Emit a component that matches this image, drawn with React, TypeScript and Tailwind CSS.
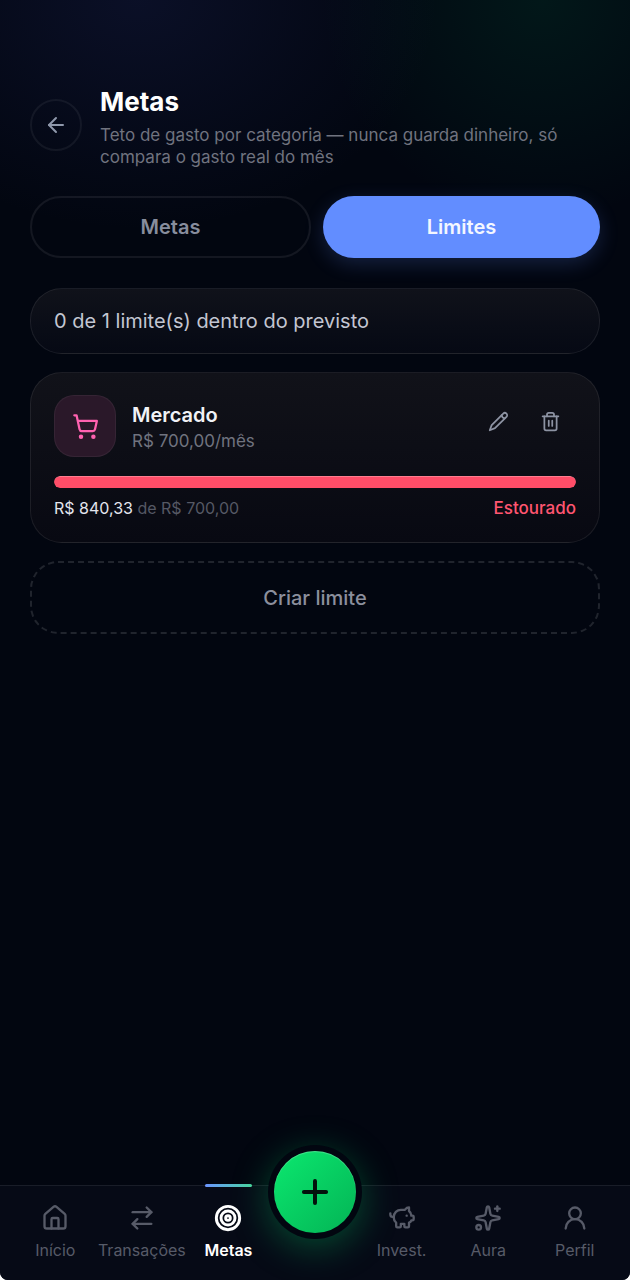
import { useState } from 'react'
import {
  ArrowLeft,
  ArrowRightLeft,
  House,
  PiggyBank,
  Plus,
  ShoppingCart,
  Sparkles,
  Target,
  Trash2,
  UserRound,
  type LucideIcon,
} from 'lucide-react'

interface Limit {
  id: string
  name: string
  limitCents: number
  spentCents: number
}

interface NavEntry {
  label: string
  icon: LucideIcon
}

const limits: Limit[] = [{ id: 'mercado', name: 'Mercado', limitCents: 70000, spentCents: 84033 }]

const leftNav: NavEntry[] = [
  { label: 'Início', icon: House },
  { label: 'Transações', icon: ArrowRightLeft },
  { label: 'Metas', icon: Target },
]

const rightNav: NavEntry[] = [
  { label: 'Invest.', icon: PiggyBank },
  { label: 'Aura', icon: Sparkles },
  { label: 'Perfil', icon: UserRound },
]

const tabs = ['Metas', 'Limites']

function brl(cents: number) {
  return `R$ ${(cents / 100).toFixed(2).replace('.', ',')}`
}

// Narrower than the lucide pencil
function PencilIcon() {
  return (
    <svg
      width={21}
      height={21}
      viewBox="0 0 24 24"
      fill="none"
      stroke="currentColor"
      strokeWidth={2}
      strokeLinecap="round"
      strokeLinejoin="round"
      aria-hidden="true"
    >
      <path d="M17.4 2.9a2.6 2.6 0 0 1 3.7 3.7L8 19.6 2 22l2.2-5.9Z" />
      <path d="M15.6 4.8c.2 2 1.500 3.400 3.600 3.600" />
    </svg>
  )
}

function LimitCard({ limit }: { limit: Limit }) {
  const pct = Math.min(100, (limit.spentCents / limit.limitCents) * 100)
  const over = limit.spentCents > limit.limitCents

  return (
    <article className="rounded-[32px] border border-white/8 bg-linear-to-b from-[#111219] to-[#080912] px-[23px] py-[22px]">
      <div className="flex items-start">
        <div className="flex size-[62px] shrink-0 items-center justify-center rounded-[20px] border border-white/5 bg-[#2a1829] text-[#ff62b0]">
          <ShoppingCart size={27} strokeWidth={2} />
        </div>
        <div className="ml-4 min-w-0 flex-1 pt-1.5">
          <h2 className="text-xl leading-7 font-semibold text-[#f1f2f6]">{limit.name}</h2>
          <p className="text-[17px] leading-6 text-[#70737f]">{brl(limit.limitCents)}/mês</p>
        </div>
        <div className="flex text-[#8d93a3]">
          <button type="button" aria-label="Editar limite" className="flex size-[52px] items-center justify-center">
            <PencilIcon />
          </button>
          <button type="button" aria-label="Excluir limite" className="flex size-[52px] items-center justify-center">
            <Trash2 size={21} strokeWidth={2} />
          </button>
        </div>
      </div>

      <div className="mt-[19px] h-3 overflow-hidden rounded-full bg-white/8">
        <div
          className="h-full rounded-full border-t border-[#ff7d8f] bg-[#ff4d68]"
          style={{ width: `${pct}%` }}
        />
      </div>

      <div className="mt-2 flex items-center justify-between leading-6">
        <p className="text-base text-[#555864]">
          <span className="text-[#e3e5ee]">{brl(limit.spentCents)}</span> de {brl(limit.limitCents)}
        </p>
        {over && <span className="text-[17px] leading-6 font-medium text-[#ff5570]">Estourado</span>}
      </div>
    </article>
  )
}

function NavLink({ entry, active }: { entry: NavEntry; active?: boolean }) {
  const Icon = entry.icon
  return (
    <a
      href="#"
      aria-current={active ? 'page' : undefined}
      className={`relative flex flex-col items-center gap-1.5 pt-[18px] ${active ? 'text-white' : 'text-[#575b68]'}`}
    >
      {active && (
        <span className="absolute -top-0.5 h-[3px] w-[47px] rounded-full bg-linear-to-r from-[#6b93ff] to-[#46d39a]" />
      )}
      <Icon size={28} strokeWidth={active ? 2.5 : 2} />
      <span className={`text-base leading-6 ${active ? 'font-semibold' : 'font-normal'}`}>{entry.label}</span>
    </a>
  )
}

export default function App() {
  const [tab, setTab] = useState('Limites')
  const within = limits.filter((l) => l.spentCents <= l.limitCents).length

  return (
    <div className="bg-white font-['Inter',sans-serif]">
      <div className="flex min-h-screen flex-col overflow-hidden rounded-b-lg bg-[#020610] bg-[radial-gradient(300px_230px_at_22%_0%,rgba(60,70,170,0.15),transparent),radial-gradient(220px_220px_at_86%_0%,rgba(0,150,90,0.12),transparent)]">
        <main className="flex-1 px-[30px] pt-[82px] pb-10">
          <header className="flex items-center gap-[18px]">
            <button
              type="button"
              aria-label="Voltar"
              className="flex size-[52px] shrink-0 items-center justify-center rounded-full border-2 border-white/6 text-[#8f98ab]"
            >
              <ArrowLeft size={24} strokeWidth={2} />
            </button>
            <div className="min-w-0 pt-0.5">
              <h1 className="text-[26px] leading-9 font-bold text-white">Metas</h1>
              <p className="mt-1 text-[17px] leading-[22px] text-[#70737f]">
                Teto de gasto por categoria — nunca guarda dinheiro, só compara o gasto real do mês
              </p>
            </div>
          </header>

          <div role="tablist" className="mt-7 flex gap-3">
            {tabs.map((t) => (
              <button
                key={t}
                type="button"
                role="tab"
                aria-selected={tab === t}
                onClick={() => setTab(t)}
                className={`h-[62px] flex-1 rounded-full text-xl font-semibold ${
                  tab === t
                    ? 'bg-[#628dff] text-[#f4f7ff] shadow-[0_6px_20px_rgba(98,141,255,0.2)]'
                    : 'border-2 border-white/7 text-[#878d9d]'
                }`}
              >
                {t}
              </button>
            ))}
          </div>

          <p className="mt-[30px] rounded-[32px] border border-white/8 bg-linear-to-b from-[#10121a] to-[#060914] px-[23px] py-[17px] text-xl leading-[30px] text-[#c3c6d2]">
            {within} de {limits.length} limite(s) dentro do previsto
          </p>

          <div className="mt-[18px] space-y-[18px]">
            {limits.map((l) => (
              <LimitCard key={l.id} limit={l} />
            ))}
            <button
              type="button"
              className="h-[73px] w-full rounded-[28px] border-2 border-dashed border-white/12 text-xl font-medium text-[#8b8f9d]"
            >
              Criar limite
            </button>
          </div>
        </main>

        <nav className="sticky bottom-0 grid h-[95px] grid-cols-7 border-t border-white/8 bg-[#060a16] px-3">
          {leftNav.map((n) => (
            <NavLink key={n.label} entry={n} active={n.label === 'Metas'} />
          ))}
          <div className="flex justify-center">
            <button
              type="button"
              aria-label="Adicionar"
              className="-mt-[41px] size-[94px] shrink-0 rounded-full bg-[#020610] p-1.5 shadow-[0_8px_36px_rgba(0,200,100,0.34)]"
            >
              <span className="flex size-full items-center justify-center rounded-full bg-linear-to-br from-[#0be86f] to-[#04b455] text-[#03120c] shadow-[inset_0_1px_1px_rgba(255,255,255,0.25)]">
                <Plus size={38} strokeWidth={2.5} />
              </span>
            </button>
          </div>
          {rightNav.map((n) => (
            <NavLink key={n.label} entry={n} />
          ))}
        </nav>
      </div>
    </div>
  )
}
